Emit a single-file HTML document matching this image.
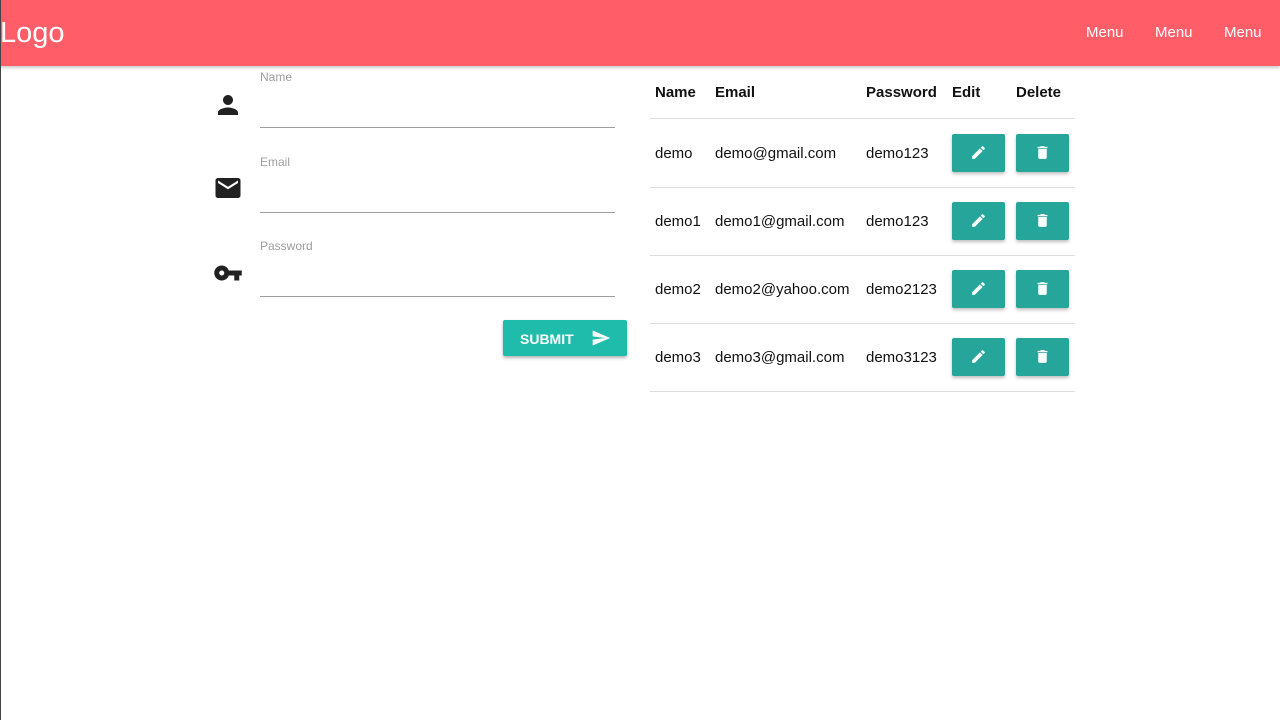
<!DOCTYPE html>
<html><head><style>
body{margin:0;width:1280px;height:720px;background:#fff;font-family:"Liberation Sans",sans-serif;position:relative;overflow:hidden}
.bl{position:absolute;left:0;top:0;width:1px;height:720px;background:#444}
.nav{position:absolute;left:0;top:0;width:1280px;height:66px;background:#ff5e69;box-shadow:0 2px 3px rgba(0,0,0,.2)}
.logo{position:absolute;left:0;top:17px;color:#fff;font-size:29px}
.m{position:absolute;top:24px;color:#fff;font-size:15px}
.lbl{position:absolute;left:260px;color:#9e9e9e;font-size:12px}
.ln{position:absolute;left:260px;width:355px;height:1px;background:#9e9e9e}
.ic{position:absolute;left:213px}
.sub{position:absolute;left:503px;top:320px;width:124px;height:36px;background:#1fbcac;color:#fff;font-size:14px;font-weight:bold;box-shadow:0 2px 3px rgba(0,0,0,.3);border-radius:2px}
.t{position:absolute;font-size:15px;color:#111}
.h{font-weight:bold}
.hl{position:absolute;left:650px;width:425px;height:1px;background:#ddd}
.b{position:absolute;width:53px;height:38px;background:#26a69a;border-radius:2px;box-shadow:0 2px 3px rgba(0,0,0,.25)}
.b svg{position:absolute;left:18px;top:10px}
</style></head><body>
<div class="nav"><div class="logo">Logo</div><div class="m" style="left:1086px">Menu</div><div class="m" style="left:1155px">Menu</div><div class="m" style="left:1224px">Menu</div></div>
<div class="bl"></div>

<svg class="ic" style="top:90px" width="30" height="30" viewBox="0 0 24 24"><path fill="#212121" d="M12 12c2.2 0 4-1.8 4-4s-1.8-4-4-4-4 1.8-4 4 1.8 4 4 4zm0 2c-2.7 0-8 1.3-8 4v2h16v-2c0-2.7-5.3-4-8-4z"/></svg>
<div class="lbl" style="top:70px">Name</div><div class="ln" style="top:127px"></div>
<svg class="ic" style="top:173px" width="30" height="30" viewBox="0 0 24 24"><path fill="#212121" d="M20 4H4c-1.1 0-2 .9-2 2v12c0 1.1.9 2 2 2h16c1.1 0 2-.9 2-2V6c0-1.1-.9-2-2-2zm0 4l-8 5-8-5V6l8 5 8-5v2z"/></svg>
<div class="lbl" style="top:155px">Email</div><div class="ln" style="top:212px"></div>
<svg class="ic" style="top:258px" width="30" height="30" viewBox="0 0 24 24"><path fill="#212121" d="M12.65 10C11.83 7.67 9.61 6 7 6c-3.31 0-6 2.690-6 6s2.69 6 6 6c2.61 0 4.83-1.67 5.65-4H17v4h4v-4h2v-4H12.65zM7 14c-1.1 0-2-.9-2-2s.9-2 2-2 2 .9 2 2-.9 2-2 2z"/></svg>
<div class="lbl" style="top:239px">Password</div><div class="ln" style="top:296px"></div>

<div class="sub"><span style="position:absolute;left:17px;top:11px">SUBMIT</span><svg style="position:absolute;left:88px;top:8px" width="20" height="20" viewBox="0 0 24 24"><path fill="#fff" d="M2 21l21-9L2 3v7l15 2-15 2z"/></svg></div>

<div class="t h" style="left:655px;top:84px">Name</div>
<div class="t h" style="left:715px;top:84px">Email</div>
<div class="t h" style="left:866px;top:84px">Password</div>
<div class="t h" style="left:952px;top:84px">Edit</div>
<div class="t h" style="left:1016px;top:84px">Delete</div>
<div class="hl" style="top:118px"></div>

<div class="t" style="left:655px;top:145px">demo</div><div class="t" style="left:715px;top:145px">demo@gmail.com</div><div class="t" style="left:866px;top:145px">demo123</div>
<div class="hl" style="top:187px"></div>
<div class="t" style="left:655px;top:213px">demo1</div><div class="t" style="left:715px;top:213px">demo1@gmail.com</div><div class="t" style="left:866px;top:213px">demo123</div>
<div class="hl" style="top:255px"></div>
<div class="t" style="left:655px;top:281px">demo2</div><div class="t" style="left:715px;top:281px">demo2@yahoo.com</div><div class="t" style="left:866px;top:281px">demo2123</div>
<div class="hl" style="top:323px"></div>
<div class="t" style="left:655px;top:349px">demo3</div><div class="t" style="left:715px;top:349px">demo3@gmail.com</div><div class="t" style="left:866px;top:349px">demo3123</div>
<div class="hl" style="top:391px"></div>

<div class="b" style="left:952px;top:134px"><svg width="17" height="17" viewBox="0 0 24 24"><path fill="#fff" d="M3 17.25V21h3.75L17.8 9.94l-3.75-3.75L3 17.25zM20.7 7.04a1 1 0 000-1.41l-2.34-2.34a1 1 0 00-1.41 0l-1.83 1.83 3.75 3.75 1.83-1.83z"/></svg></div>
<div class="b" style="left:1016px;top:134px"><svg width="17" height="17" viewBox="0 0 24 24"><path fill="#fff" d="M6 19c0 1.1.9 2 2 2h8c1.1 0 2-.9 2-2V7H6v12zM19 4h-3.5l-1-1h-5l-1 1H5v2h14V4z"/></svg></div>
<div class="b" style="left:952px;top:202px"><svg width="17" height="17" viewBox="0 0 24 24"><path fill="#fff" d="M3 17.25V21h3.75L17.8 9.94l-3.75-3.75L3 17.25zM20.7 7.04a1 1 0 000-1.41l-2.34-2.34a1 1 0 00-1.41 0l-1.83 1.83 3.75 3.75 1.83-1.83z"/></svg></div>
<div class="b" style="left:1016px;top:202px"><svg width="17" height="17" viewBox="0 0 24 24"><path fill="#fff" d="M6 19c0 1.1.9 2 2 2h8c1.1 0 2-.9 2-2V7H6v12zM19 4h-3.5l-1-1h-5l-1 1H5v2h14V4z"/></svg></div>
<div class="b" style="left:952px;top:270px"><svg width="17" height="17" viewBox="0 0 24 24"><path fill="#fff" d="M3 17.25V21h3.75L17.8 9.94l-3.75-3.75L3 17.25zM20.7 7.04a1 1 0 000-1.41l-2.34-2.34a1 1 0 00-1.41 0l-1.83 1.83 3.75 3.75 1.83-1.83z"/></svg></div>
<div class="b" style="left:1016px;top:270px"><svg width="17" height="17" viewBox="0 0 24 24"><path fill="#fff" d="M6 19c0 1.1.9 2 2 2h8c1.1 0 2-.9 2-2V7H6v12zM19 4h-3.5l-1-1h-5l-1 1H5v2h14V4z"/></svg></div>
<div class="b" style="left:952px;top:338px"><svg width="17" height="17" viewBox="0 0 24 24"><path fill="#fff" d="M3 17.25V21h3.75L17.8 9.94l-3.75-3.75L3 17.25zM20.7 7.04a1 1 0 000-1.41l-2.34-2.34a1 1 0 00-1.41 0l-1.83 1.83 3.75 3.75 1.83-1.83z"/></svg></div>
<div class="b" style="left:1016px;top:338px"><svg width="17" height="17" viewBox="0 0 24 24"><path fill="#fff" d="M6 19c0 1.1.9 2 2 2h8c1.1 0 2-.9 2-2V7H6v12zM19 4h-3.5l-1-1h-5l-1 1H5v2h14V4z"/></svg></div>
</body></html>
